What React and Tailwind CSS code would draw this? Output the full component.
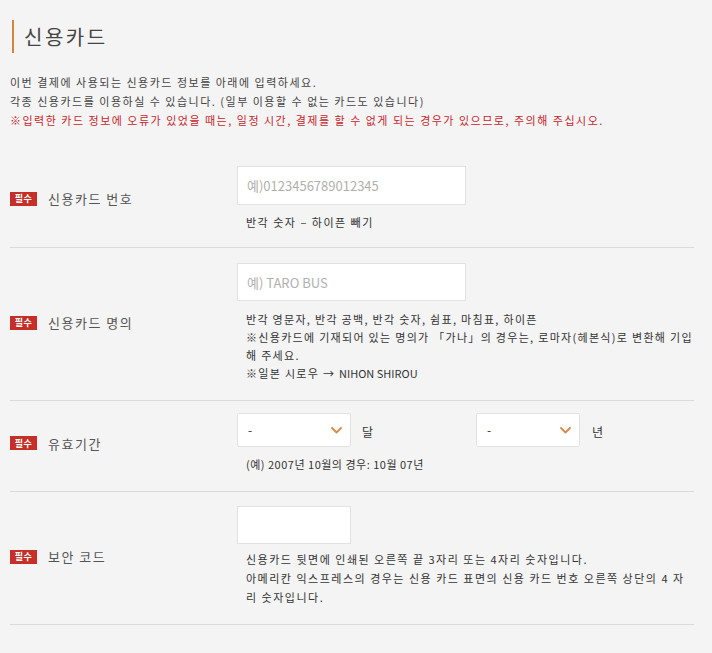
import React from "react";

const font = { fontFamily: '"Noto Sans CJK KR", "Noto Sans", sans-serif' };

function Badge() {
  return (
    <span className="inline-flex items-center justify-center w-[27px] h-[14px] bg-[#c62f28] text-white text-[9px] leading-none font-bold tracking-[0.5px]">
      필수
    </span>
  );
}

function Label({ children }) {
  return (
    <div className="w-[227px] shrink-0 flex items-center">
      <Badge />
      <span className="ml-[11px] text-[13px] text-[#555] leading-none tracking-[1.5px]">{children}</span>
    </div>
  );
}

function Chevron() {
  return (
    <svg width="11" height="7" viewBox="0 0 11 7" fill="none">
      <path d="M1 1l4.5 4.5L10 1" stroke="#d9894a" strokeWidth="1.8" strokeLinecap="round" strokeLinejoin="round" />
    </svg>
  );
}

function Select({ w }) {
  return (
    <div className={`${w} h-[34px] bg-white border border-[#e2e2e2] rounded-[2px] flex items-center justify-between pl-[10px] pr-[8px]`}>
      <span className="text-[12px] text-[#333] leading-none">-</span>
      <Chevron />
    </div>
  );
}

function Row({ label, pad, children }) {
  return (
    <div className={`flex items-center ${pad} border-b-[1.5px] border-[#d9d9d9]`}>
      <Label>{label}</Label>
      <div className="flex-1">{children}</div>
    </div>
  );
}

export default function App() {
  return (
    <div className="w-[712px] h-[653px] bg-[#f4f4f4] overflow-hidden text-[#333]" style={font}>
      <div className="pl-[10px] pr-[18px]">
        <div className="pt-[20px] flex items-center">
          <div className="w-[2px] h-[33px] bg-[#d5853e] ml-[2px]" />
          <h1 className="ml-[10px] text-[20px] text-[#444] leading-none tracking-[2.5px]">신용카드</h1>
        </div>
        <div className="mt-[20px] text-[11px] leading-[19px] tracking-[1.5px]">
          <p className="text-[#444]">이번 결제에 사용되는 신용카드 정보를 아래에 입력하세요.</p>
          <p className="text-[#444]">각종 신용카드를 이용하실 수 있습니다. (일부 이용할 수 없는 카드도 있습니다)</p>
          <p className="text-[#c8262c]">※입력한 카드 정보에 오류가 있었을 때는, 일정 시간, 결제를 할 수 없게 되는 경우가 있으므로, 주의해 주십시오.</p>
        </div>

        <div className="mt-[22px]">
          <Row label="신용카드 번호" pad="pt-[14px] pb-[16px]">
            <input
              className="w-[229px] h-[39px] bg-white border border-[#e2e2e2] px-[9px] text-[13px] outline-none placeholder:text-[#b0b0b0]"
              placeholder="예)0123456789012345"
            />
            <p className="mt-[8px] pl-[9px] text-[11px] leading-[18px] tracking-[1.5px]">반각 숫자 – 하이픈 빼기</p>
          </Row>

          <Row label="신용카드 명의" pad="pt-[15px] pb-[18px]">
            <input
              className="w-[229px] h-[38px] bg-white border border-[#e2e2e2] px-[9px] text-[13px] outline-none placeholder:text-[#b0b0b0]"
              placeholder="예) TARO BUS"
            />
            <div className="mt-[9px] pl-[9px] text-[11px] leading-[18px] tracking-[1.3px]">
              <p>반각 영문자, 반각 공백, 반각 숫자, 쉼표, 마침표, 하이픈</p>
              <p>※신용카드에 기재되어 있는 명의가 「가나」의 경우는, 로마자(헤본식)로 변환해 기입해 주세요.</p>
              <p>※일본 시로우 → <span className="tracking-normal">NIHON SHIROU</span></p>
            </div>
          </Row>

          <Row label="유효기간" pad="pt-[12px] pb-[18px]">
            <div className="flex items-center">
              <Select w="w-[114px]" />
              <span className="ml-[11px] text-[12px] w-[114px] pt-[4px]">달</span>
              <Select w="w-[104px]" />
              <span className="ml-[12px] text-[12px] pt-[4px]">년</span>
            </div>
            <p className="mt-[8px] pl-[9px] text-[11px] leading-[18px] tracking-[0.5px]">(예) 2007년 10월의 경우: 10월 07년</p>
          </Row>

          <Row label="보안 코드" pad="pt-[14px] pb-[17px]">
            <input className="w-[114px] h-[38px] bg-white border border-[#e2e2e2] outline-none" />
            <div className="mt-[6px] pl-[9px] pr-[4px] text-[11px] leading-[19px] tracking-[1.5px]">
              <p>신용카드 뒷면에 인쇄된 오른쪽 끝 3자리 또는 4자리 숫자입니다.</p>
              <p>아메리칸 익스프레스의 경우는 신용 카드 표면의 신용 카드 번호 오른쪽 상단의 4 자리 숫자입니다.</p>
            </div>
          </Row>
        </div>
      </div>
    </div>
  );
}
